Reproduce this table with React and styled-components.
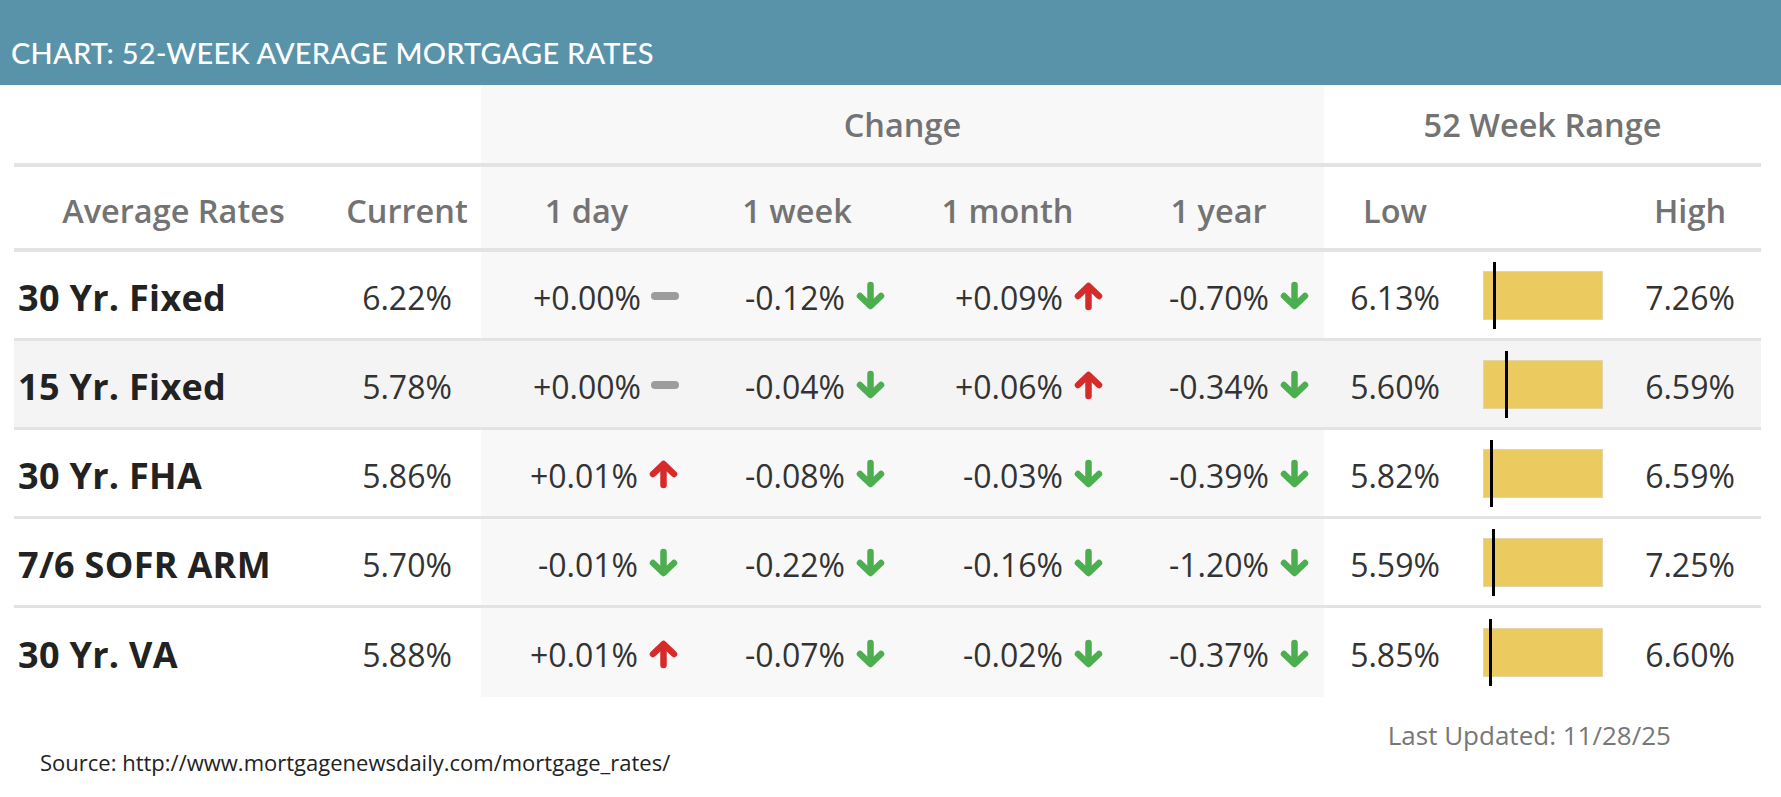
import React from "react";
import styled, { createGlobalStyle } from "styled-components";

const GlobalStyle = createGlobalStyle`
  body {
    margin: 0;
    background: #ffffff;
    font-family: "Open Sans", "Liberation Sans", sans-serif;
  }
`;

const COLS = "319px 148px 211px 210px 211px 211px 142px 153px 142px";

const rates = [
  {
    name: "30 Yr. Fixed",
    current: 6.22,
    changes: [["+0.00%", "flat"], ["-0.12%", "down"], ["+0.09%", "up"], ["-0.70%", "down"]],
    low: 6.13,
    high: 7.26,
  },
  {
    name: "15 Yr. Fixed",
    current: 5.78,
    changes: [["+0.00%", "flat"], ["-0.04%", "down"], ["+0.06%", "up"], ["-0.34%", "down"]],
    low: 5.6,
    high: 6.59,
  },
  {
    name: "30 Yr. FHA",
    current: 5.86,
    changes: [["+0.01%", "up"], ["-0.08%", "down"], ["-0.03%", "down"], ["-0.39%", "down"]],
    low: 5.82,
    high: 6.59,
  },
  {
    name: "7/6 SOFR ARM",
    current: 5.7,
    changes: [["-0.01%", "down"], ["-0.22%", "down"], ["-0.16%", "down"], ["-1.20%", "down"]],
    low: 5.59,
    high: 7.25,
  },
  {
    name: "30 Yr. VA",
    current: 5.88,
    changes: [["+0.01%", "up"], ["-0.07%", "down"], ["-0.02%", "down"], ["-0.37%", "down"]],
    low: 5.85,
    high: 6.6,
  },
];

// right padding of each change column, as in the widget
const changePad = [13, 16, 9, 14];

const Page = styled.div`
  width: 1781px;
`;

const TitleBar = styled.div`
  height: 85px;
  background: #5893aa;
  display: flex;
  align-items: flex-end;
  padding: 0 0 14px 11px;
  box-sizing: border-box;
`;

const Title = styled.h1`
  margin: 0;
  font-family: "Lato", "Open Sans", sans-serif;
  font-weight: 500;
  font-size: 29px;
  line-height: 36px;
  color: #ffffff;
  letter-spacing: 0.2px;
`;

const Table = styled.div`
  width: 1747px;
  margin-left: 14px;
`;

const Row = styled.div`
  display: grid;
  grid-template-columns: ${COLS};
  height: ${(p) => p.$height}px;
  border-bottom: ${(p) => (p.$line ? `${p.$line}px solid #e3e3e3` : "none")};
  background: ${(p) => (p.$striped ? "#f4f4f4" : "#ffffff")};
`;

const Cell = styled.div`
  display: flex;
  align-items: center;
  justify-content: ${(p) => p.$justify || "center"};
  grid-column: ${(p) => (p.$span ? `span ${p.$span}` : "auto")};
  background: ${(p) => (p.$shaded ? "#f8f8f8" : "transparent")};
  padding: ${(p) => p.$pad || "0"};
  box-sizing: border-box;
  gap: 10px;
`;

const HeadText = styled.span`
  font-size: 32.5px;
  font-weight: 600;
  color: #737373;
  white-space: nowrap;
`;

const Label = styled.span`
  font-size: 36px;
  font-weight: 700;
  color: #222222;
  letter-spacing: 0.3px;
  white-space: nowrap;
`;

const Value = styled.span`
  font-size: 32px;
  font-weight: 400;
  color: #333333;
`;

const Bar = styled.div`
  position: relative;
  width: 120px;
  height: 49px;
  background: #ebcb5f;
  box-shadow: inset 0 0 0 1px #e2d6a8;
`;

const Marker = styled.div`
  position: absolute;
  top: -9px;
  width: 3px;
  height: 67px;
  background: #000000;
`;

const Dash = styled.span`
  display: inline-block;
  width: 28px;
  height: 8px;
  border-radius: 4px;
  background: #9d9d9d;
  margin-top: -2px;
`;

const Footer = styled.div`
  display: flex;
  flex-direction: column;
`;

const Updated = styled.div`
  margin-top: 23px;
  align-self: flex-end;
  padding-right: 110px;
  font-size: 26px;
  line-height: 30px;
  color: #777777;
`;

const Source = styled.div`
  margin-top: -2px;
  padding-left: 40px;
  font-size: 22px;
  line-height: 28px;
  color: #222222;
`;

const Arrow = ({ dir }) => {
  const up = dir === "up";
  return (
    <svg
      width="31"
      height="30"
      viewBox="0 0 31 30"
      fill="none"
      stroke={up ? "#d52b2b" : "#4cae4f"}
      strokeWidth="6.5"
      strokeLinecap="round"
      strokeLinejoin="round"
      style={{ transform: up ? "scaleY(-1)" : "none", marginTop: "-2px" }}
    >
      <line x1="15.5" y1="4" x2="15.5" y2="24" />
      <polyline points="5,15 15.5,25 26,15" />
    </svg>
  );
};

const Trend = ({ dir }) => (dir === "flat" ? <Dash /> : <Arrow dir={dir} />);

const headers = ["Current", "1 day", "1 week", "1 month", "1 year", "Low", "", "High"];

const RateRow = ({ rate, index, last }) => {
  const frac = (rate.current - rate.low) / (rate.high - rate.low);
  return (
    <Row $height={last ? 89 : 86} $line={last ? 0 : 3} $striped={index === 1}>
      <Cell $justify="flex-start" $pad="4px 0 0 4px">
        <Label>{rate.name}</Label>
      </Cell>
      <Cell $pad="4px 0 0 0">
        <Value>{rate.current.toFixed(2)}%</Value>
      </Cell>
      {rate.changes.map(([val, dir], i) => (
        <Cell
          key={i}
          $shaded={index !== 1}
          $justify="flex-end"
          $pad={`4px ${changePad[i]}px 0 0`}
        >
          <Value>{val}</Value>
          <Trend dir={dir} />
        </Cell>
      ))}
      <Cell $pad="4px 0 0 0">
        <Value>{rate.low.toFixed(2)}%</Value>
      </Cell>
      <Cell>
        <Bar>
          <Marker style={{ left: `${1.5 + frac * 114}px` }} />
        </Bar>
      </Cell>
      <Cell $pad="4px 0 0 0">
        <Value>{rate.high.toFixed(2)}%</Value>
      </Cell>
    </Row>
  );
};

export default function App() {
  return (
    <Page>
      <GlobalStyle />
      <TitleBar>
        <Title>CHART: 52-WEEK AVERAGE MORTGAGE RATES</Title>
      </TitleBar>
      <Table>
        <Row $height={78} $line={4}>
          <Cell $span={2} />
          <Cell $span={4} $shaded>
            <HeadText>Change</HeadText>
          </Cell>
          <Cell $span={3}>
            <HeadText>52 Week Range</HeadText>
          </Cell>
        </Row>
        <Row $height={81} $line={4}>
          <Cell $pad="5px 0 0 0">
            <HeadText>Average Rates</HeadText>
          </Cell>
          {headers.map((h, i) => (
            <Cell key={i} $shaded={i >= 1 && i <= 4} $pad="5px 0 0 0">
              <HeadText>{h}</HeadText>
            </Cell>
          ))}
        </Row>
        {rates.map((r, i) => (
          <RateRow key={r.name} rate={r} index={i} last={i === rates.length - 1} />
        ))}
      </Table>
      <Footer>
        <Updated>Last Updated: 11/28/25</Updated>
        <Source>Source: http://www.mortgagenewsdaily.com/mortgage_rates/</Source>
      </Footer>
    </Page>
  );
}
